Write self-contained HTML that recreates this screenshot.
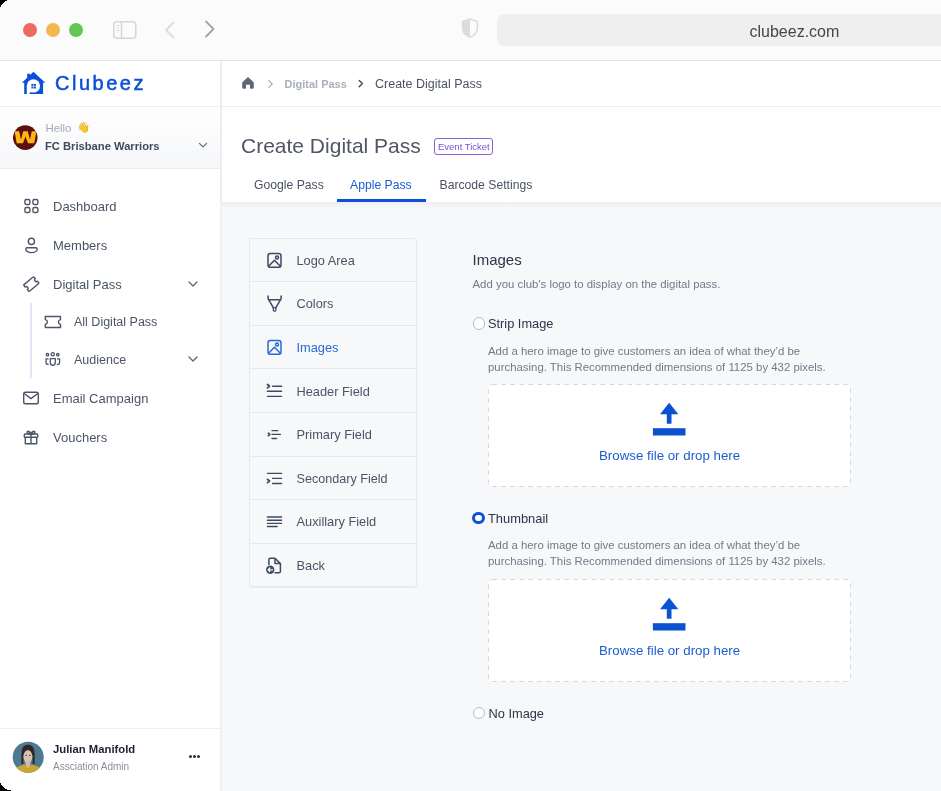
<!DOCTYPE html>
<html><head><meta charset="utf-8">
<style>
*{box-sizing:border-box;margin:0;padding:0}
html,body{width:941px;height:791px;overflow:hidden;background:#000}
body{font-family:"Liberation Sans",sans-serif;position:relative}
.win{will-change:transform;position:absolute;left:0;top:0;width:941px;height:791px;background:#fff;overflow:hidden}
.abs{position:absolute}
.t{position:absolute;white-space:nowrap;line-height:20px;height:20px}
/* chrome */
.chrome{position:absolute;left:0;top:0;width:941px;height:61px;background:#fbfbfb;border-bottom:1px solid #e4e4e4}
.dot{position:absolute;top:23px;width:14px;height:14px;border-radius:50%}
.url{position:absolute;left:497px;top:14px;width:460px;height:32px;border-radius:7px;background:#efefef}
/* sidebar */
.side{position:absolute;left:0;top:61px;width:222px;height:730px;background:#fff;box-shadow:inset -2px 0 0 #f0f1f4}
.nav{color:#4b5567;font-size:13px}
.main{position:absolute;left:222px;top:61px;width:719px;height:730px;background:#f7f8fa}
</style></head><body><div class="win">
<!-- CHROME -->
<div class="chrome">
  <div class="dot" style="left:23px;background:#ec6a5e"></div>
  <div class="dot" style="left:46px;background:#f2b84d"></div>
  <div class="dot" style="left:69px;background:#62c655"></div>
  <svg class="abs" style="left:110px;top:18px" width="30" height="24" viewBox="0 0 30 24">
    <rect x="3.75" y="3.75" width="22" height="16.5" rx="3" fill="none" stroke="#d6d6d6" stroke-width="1.5"/>
    <line x1="11.5" y1="3.5" x2="11.5" y2="20.5" stroke="#d6d6d6" stroke-width="1.5"/>
    <line x1="6.5" y1="7.5" x2="9" y2="7.5" stroke="#d6d6d6" stroke-width="1"/>
    <line x1="6.5" y1="10" x2="9" y2="10" stroke="#d6d6d6" stroke-width="1"/>
    <line x1="6.5" y1="12.5" x2="9" y2="12.5" stroke="#d6d6d6" stroke-width="1"/>
  </svg>
  <svg class="abs" style="left:160px;top:17.5px" width="20" height="24" viewBox="0 0 20 24">
    <polyline points="13.5,4.5 6,12 13.5,19.5" fill="none" stroke="#dcdcdc" stroke-width="1.8" stroke-linecap="round" stroke-linejoin="round"/>
  </svg>
  <svg class="abs" style="left:200px;top:17px" width="20" height="24" viewBox="0 0 20 24">
    <polyline points="6,4.5 13.5,12 6,19.5" fill="none" stroke="#a3a3a3" stroke-width="1.8" stroke-linecap="round" stroke-linejoin="round"/>
  </svg>
  <svg class="abs" style="left:460px;top:16px" width="20" height="24" viewBox="0 0 20 24">
    <path d="M10 3.1 L17.4 5.4 V12.4 C17.4 16.6 14 19.4 10 21.3 C6 19.4 2.6 16.6 2.6 12.4 V5.4 Z" fill="none" stroke="#dcdce0" stroke-width="1.6" stroke-linejoin="round"/>
    <path d="M10 3.1 L2.6 5.4 V12.4 C2.6 16.6 6 19.4 10 21.3 Z" fill="#dcdce0"/>
  </svg>
  <div class="url"></div>
  <div class="t" style="left:749.5px;top:22px;font-size:16px;color:#464646">clubeez.com</div>
</div>

<!-- SIDEBAR -->
<div class="side"></div>
<div class="abs" style="left:0;top:106px;width:220px;height:1px;background:#eceef1"></div>
<svg class="abs" style="left:20px;top:68px" width="30" height="30" viewBox="0 0 30 30">
  <path fill="#0b50d8" d="M13.4 3.7 L25.3 14.7 H23.1 V26.1 H4.2 V14.7 H1.9 L7.2 9.8 V5.7 H10.2 V7 Z"/>
  <circle cx="13.4" cy="17.9" r="6.7" fill="#fff"/>
  <path fill="#fff" d="M6.8 18 V26.3 H8.9 L11 23.5 Z"/>
  <rect x="11.4" y="15.9" width="2" height="2" fill="#0b50d8"/>
  <rect x="13.9" y="15.9" width="2" height="2" fill="#0b50d8"/>
  <rect x="11.4" y="18.5" width="2" height="2" fill="#0b50d8"/>
  <rect x="13.9" y="18.5" width="2" height="2" fill="#0b50d8"/>
</svg>
<div class="t" style="left:55px;top:73px;font-size:20px;letter-spacing:2.5px;color:#0b50d8;-webkit-text-stroke:0.5px #0b50d8">Clubeez</div>

<div class="abs" style="left:0;top:107px;width:220px;height:61px;background:linear-gradient(#ffffff,#f6f7f9)"></div>
<div class="abs" style="left:0;top:168px;width:220px;height:1px;background:#e9ebef"></div>
<svg class="abs" style="left:13px;top:125px" width="25" height="25" viewBox="0 0 25 25">
  <circle cx="12.25" cy="12.6" r="12.3" fill="#5a0f12"/>
  <path fill="#ffb612" d="M1.59 6.26 L6.24 6.26 L7.97 14.63 L10.23 6.26 L14.74 6.26 L17 14.63 L18.73 6.26 L23.38 6.26 L21.25 18.35 L15.01 18.35 L12.49 11.44 L9.96 18.35 L3.72 18.35 Z"/>
</svg>
<div class="t" style="left:45.5px;top:117.5px;font-size:11.4px;color:#a4aab4">Hello</div>
<div class="t" style="left:76.5px;top:117px;font-size:10.5px;">&#128075;</div>
<div class="t" style="left:45px;top:136px;font-size:11.2px;font-weight:bold;color:#3f4a5c">FC Brisbane Warriors</div>
<svg class="abs" style="left:196px;top:140px" width="14" height="10" viewBox="0 0 14 10">
  <polyline points="3.4,3.3 7,6.9 10.6,3.3" fill="none" stroke="#5f677a" stroke-width="1.15" stroke-linecap="round" stroke-linejoin="round"/>
</svg>

<!-- nav -->
<svg class="abs" style="left:22px;top:197px" width="18" height="18" viewBox="0 0 18 18" fill="none" stroke="#4b5567" stroke-width="1.4">
  <rect x="2.9" y="2.5" width="5" height="5" rx="1.6"/><rect x="10.9" y="2.5" width="5" height="5" rx="1.6"/>
  <rect x="2.9" y="10.5" width="5" height="5" rx="1.6"/><rect x="10.9" y="10.5" width="5" height="5" rx="1.6"/>
</svg>
<div class="t nav" style="left:53px;top:197px">Dashboard</div>

<svg class="abs" style="left:22px;top:236px" width="18" height="18" viewBox="0 0 18 18" fill="none" stroke="#4b5567" stroke-width="1.4">
  <circle cx="9.4" cy="5.4" r="3.1"/>
  <path d="M5.3 11.8 H13.7 C14.6 11.8 15.2 12.4 15.2 13.2 C15.2 15.2 12.6 16.6 9.5 16.6 C6.4 16.6 3.8 15.2 3.8 13.2 C3.8 12.4 4.4 11.8 5.3 11.8 Z"/>
</svg>
<div class="t nav" style="left:53px;top:236px">Members</div>

<svg class="abs" style="left:22px;top:275px" width="18" height="18" viewBox="0 0 18 18" fill="none" stroke="#4b5567" stroke-width="1.4" stroke-linejoin="round">
  <path transform="translate(9.3 9.1) rotate(-40)" d="M -5.6 -4.3 H 5.6 Q 6.6 -4.3 6.6 -3.3 V -1.7 A 1.7 1.7 0 0 0 6.6 1.7 V 3.3 Q 6.6 4.3 5.6 4.3 H -5.6 Q -6.6 4.3 -6.6 3.3 V 1.7 A 1.7 1.7 0 0 0 -6.6 -1.7 V -3.3 Q -6.6 -4.3 -5.6 -4.3 Z"/>
</svg>
<div class="t nav" style="left:53px;top:275px">Digital Pass</div>
<svg class="abs" style="left:186px;top:279px" width="14" height="10" viewBox="0 0 14 10">
  <polyline points="3,3 7,7 11,3" fill="none" stroke="#5b6478" stroke-width="1.3" stroke-linecap="round" stroke-linejoin="round"/>
</svg>

<div class="abs" style="left:30px;top:303px;width:1.6px;height:75px;background:#e0e7f7"></div>
<svg class="abs" style="left:43px;top:313px" width="20" height="18" viewBox="0 0 20 18" fill="none" stroke="#4b5567" stroke-width="1.4" stroke-linejoin="round">
  <path d="M2.3 3.5 H17.5 V6.6 C16.2 6.9 15.4 7.8 15.4 9 C15.4 10.2 16.2 11.1 17.5 11.4 V14.5 H2.3 V11.4 C3.6 11.1 4.4 10.2 4.4 9 C4.4 7.8 3.6 6.9 2.3 6.6 Z"/>
</svg>
<div class="t nav" style="left:74px;top:312px;font-size:12.5px">All Digital Pass</div>

<svg class="abs" style="left:43px;top:350px" width="20" height="18" viewBox="0 0 20 18" fill="none" stroke="#4b5567" stroke-width="1.3" stroke-linejoin="round" stroke-linecap="round">
  <circle cx="9.7" cy="4.3" r="1.6"/><circle cx="4.5" cy="4.7" r="1.2"/><circle cx="14.8" cy="4.7" r="1.2"/>
  <path d="M7.3 8.6 H12.3 V12.6 C12.3 14.4 11.2 15.3 9.8 15.3 C8.4 15.3 7.3 14.4 7.3 12.6 Z"/>
  <path d="M5.1 8.9 H3 V12.2 C3 13.6 4 14.4 5.1 14.4"/>
  <path d="M14.5 8.9 H16.6 V12.2 C16.6 13.6 15.6 14.4 14.5 14.4"/>
</svg>
<div class="t nav" style="left:74px;top:350px;font-size:12.5px">Audience</div>
<svg class="abs" style="left:186px;top:354px" width="14" height="10" viewBox="0 0 14 10">
  <polyline points="3,3 7,7 11,3" fill="none" stroke="#5b6478" stroke-width="1.3" stroke-linecap="round" stroke-linejoin="round"/>
</svg>

<svg class="abs" style="left:22px;top:389px" width="18" height="18" viewBox="0 0 18 18" fill="none" stroke="#4b5567" stroke-width="1.4" stroke-linejoin="round">
  <rect x="1.7" y="3.3" width="14.6" height="11.4" rx="1.8"/>
  <polyline points="2.2,4.5 9,9.6 15.8,4.5"/>
</svg>
<div class="t nav" style="left:53px;top:389px">Email Campaign</div>

<svg class="abs" style="left:22px;top:428px" width="18" height="18" viewBox="0 0 18 18" fill="none" stroke="#4b5567" stroke-width="1.4" stroke-linejoin="round">
  <rect x="2.3" y="6" width="13.4" height="3.2" rx="0.8"/>
  <path d="M3.3 9.2 V15.8 H14.7 V9.2"/>
  <line x1="9" y1="6" x2="9" y2="15.8"/>
  <path d="M9 6 C8 3.5 5.5 2.5 5 4 C4.6 5.3 7 6 9 6 C11 6 13.4 5.3 13 4 C12.5 2.5 10 3.5 9 6"/>
</svg>
<div class="t nav" style="left:53px;top:428px">Vouchers</div>

<!-- user -->
<div class="abs" style="left:0;top:728px;width:220px;height:1px;background:#eef0f3"></div>
<svg class="abs" style="left:12px;top:741px" width="32" height="32" viewBox="0 0 32 32">
  <defs><clipPath id="av"><circle cx="16.2" cy="16.2" r="15.5"/></clipPath></defs>
  <g clip-path="url(#av)">
    <rect width="32" height="32" fill="#4d7a92"/>
    <path d="M9.4 12.5 C9.4 6.2 12.2 3.8 16 3.8 C19.8 3.8 22.6 6.2 22.6 12.5 V23 C21.8 23.6 21 23.4 20.6 22.6 V14 H11.4 V22.6 C11 23.4 10.2 23.6 9.4 23 Z" fill="#302826"/>
    <ellipse cx="15.9" cy="15.6" rx="4.4" ry="6.6" fill="#dcc0b4"/>
    <path d="M11.3 12.6 C11.5 8.2 13.5 6.6 16 6.6 C18.5 6.6 20.5 8.2 20.7 12.6 C19.6 10 17.6 9 16 9 C14.4 9 12.4 10 11.3 12.6 Z" fill="#302826"/>
    <ellipse cx="14" cy="14.3" rx="0.9" ry="0.6" fill="#4a3a36"/>
    <ellipse cx="17.9" cy="14.3" rx="0.9" ry="0.6" fill="#4a3a36"/>
    <rect x="13.4" y="20.5" width="5" height="6.5" fill="#d6b4a8"/>
    <path d="M2 33 L4.4 26.5 C7 25 10 24.2 12.4 23.4 L16 27.6 L19.6 23.4 C22.2 24.2 25.6 25.2 28.4 26.4 L31 33 Z" fill="#cca632"/>
  </g>
</svg>
<div class="t" style="left:53px;top:739px;font-size:11.3px;font-weight:bold;color:#1b2035">Julian Manifold</div>
<div class="t" style="left:53px;top:757px;font-size:10px;color:#8a8f99">Assciation Admin</div>
<div class="abs" style="left:189px;top:755px;width:3px;height:3px;border-radius:50%;background:#2a2f3d"></div>
<div class="abs" style="left:193px;top:755px;width:3px;height:3px;border-radius:50%;background:#2a2f3d"></div>
<div class="abs" style="left:197px;top:755px;width:3px;height:3px;border-radius:50%;background:#2a2f3d"></div>


<!-- MAIN -->
<div class="main"></div>
<!-- header -->
<div class="abs" style="left:222px;top:61px;width:719px;height:141px;background:#fff;box-shadow:0 1px 3px rgba(20,30,50,0.06)"></div>
<div class="abs" style="left:222px;top:106px;width:719px;height:1px;background:#eceef1"></div>
<svg class="abs" style="left:240px;top:75px" width="16" height="16" viewBox="0 0 16 16">
  <path fill="#5e6576" d="M8 2 L13.8 7.6 V12.6 C13.8 13.4 13.3 13.8 12.6 13.8 H11 C10.4 13.8 10 13.4 10 12.8 V9.8 H6 V12.8 C6 13.4 5.6 13.8 5 13.8 H3.4 C2.7 13.8 2.2 13.4 2.2 12.6 V7.6 Z"/>
</svg>
<svg class="abs" style="left:264.5px;top:78px" width="12" height="12" viewBox="0 0 12 12">
  <polyline points="3.8,2.3 7.2,5.8 3.8,9.3" fill="none" stroke="#a4aab5" stroke-width="1.2" stroke-linecap="round" stroke-linejoin="round"/>
</svg>
<div class="t" style="left:284.5px;top:74px;font-size:11px;font-weight:bold;color:#a9afba">Digital Pass</div>
<svg class="abs" style="left:355px;top:78px" width="12" height="12" viewBox="0 0 12 12">
  <polyline points="4.2,2.5 7.4,5.6 4.2,8.7" fill="none" stroke="#3f4656" stroke-width="1.4" stroke-linecap="round" stroke-linejoin="round"/>
</svg>
<div class="t" style="left:375px;top:74px;font-size:12.5px;color:#4b5263">Create Digital Pass</div>

<div class="t" style="left:241px;top:134px;font-size:21px;color:#505666;height:24px;line-height:24px">Create Digital Pass</div>
<div class="abs" style="left:434px;top:138px;width:59px;height:17px;border:1px solid #8a5ddb;border-radius:3px"></div>
<div class="t" style="left:438px;top:137px;font-size:9.5px;color:#7d4fd6">Event Ticket</div>

<div class="t" style="left:254px;top:175px;font-size:12.2px;color:#4b5262">Google Pass</div>
<div class="t" style="left:350px;top:175px;font-size:12.2px;color:#1d5cd4">Apple Pass</div>
<div class="t" style="left:439.5px;top:175px;font-size:12.2px;color:#4b5262">Barcode Settings</div>
<div class="abs" style="left:337px;top:199px;width:89px;height:3px;background:#0b50d8"></div>


<div class="abs" style="left:222px;top:202px;width:719px;height:589px;background:#f7f8fa"></div>
<div class="abs" style="left:222px;top:202px;width:719px;height:6px;background:linear-gradient(rgba(30,40,60,0.05),rgba(30,40,60,0))"></div>
<!-- left menu panel -->
<div class="abs" style="left:249px;top:238px;width:168px;height:349px;border:1px solid #e6e8ec;border-radius:3px;background:#f7f8fa;box-shadow:0 1px 1px rgba(20,30,50,0.06)"></div>
<div class="abs" style="left:249px;top:281px;width:168px;height:1px;background:#e6e8ec"></div>
<div class="abs" style="left:249px;top:325px;width:168px;height:1px;background:#e6e8ec"></div>
<div class="abs" style="left:249px;top:368px;width:168px;height:1px;background:#e6e8ec"></div>
<div class="abs" style="left:249px;top:412px;width:168px;height:1px;background:#e6e8ec"></div>
<div class="abs" style="left:249px;top:456px;width:168px;height:1px;background:#e6e8ec"></div>
<div class="abs" style="left:249px;top:499px;width:168px;height:1px;background:#e6e8ec"></div>
<div class="abs" style="left:249px;top:543px;width:168px;height:1px;background:#e6e8ec"></div>

<svg class="abs" style="left:262px;top:248px" width="26" height="24" viewBox="0 0 26 24" fill="none" stroke="#3f4a62" stroke-width="1.5" stroke-linejoin="round">
  <rect x="6" y="5.6" width="13" height="13.7" rx="2.4"/>
  <path d="M6.6 18.2 L12.4 12.2 L18.4 18.2"/>
  <circle cx="15" cy="9.6" r="1.5"/>
</svg>
<div class="t" style="left:296.5px;top:251px;font-size:12.8px;color:#4b5466">Logo Area</div>

<svg class="abs" style="left:262px;top:291px" width="26" height="24" viewBox="0 0 26 24" fill="none" stroke="#3f4a62" stroke-width="1.5" stroke-linejoin="round" stroke-linecap="round">
  <path d="M6.1 5.1 V7.4 C6.1 8.2 6.5 8.8 7.1 8.8 H18.1 C18.7 8.8 19.1 8.2 19.1 7.4 V5.1"/>
  <path d="M6.8 8.8 L11.3 16.6 M18.4 8.8 L13.9 16.6"/>
  <path d="M11.3 16.6 V18.9 A1.3 1.3 0 0 0 13.9 18.9 V16.6 Z" stroke-width="1.3"/>
</svg>
<div class="t" style="left:296.5px;top:294px;font-size:12.8px;color:#4b5466">Colors</div>

<svg class="abs" style="left:262px;top:335px" width="26" height="24" viewBox="0 0 26 24" fill="none" stroke="#2b69d6" stroke-width="1.5" stroke-linejoin="round">
  <rect x="6" y="5.6" width="13" height="13.7" rx="2.4"/>
  <path d="M6.6 18.2 L12.4 12.2 L18.4 18.2"/>
  <circle cx="15" cy="9.6" r="1.5"/>
</svg>
<div class="t" style="left:296.5px;top:338px;font-size:12.8px;color:#2b69d6">Images</div>

<svg class="abs" style="left:262px;top:378px" width="26" height="24" viewBox="0 0 26 24" fill="none" stroke="#3f4a62" stroke-width="1.35" stroke-linecap="round" stroke-linejoin="round">
  <polyline points="5.5,6.5 7.5,8.2 5.5,9.9" stroke-width="1.8"/>
  <line x1="10.6" y1="8.2" x2="19.6" y2="8.2"/>
  <line x1="5.4" y1="13.2" x2="19.6" y2="13.2"/>
  <line x1="5.4" y1="18.3" x2="19.6" y2="18.3"/>
</svg>
<div class="t" style="left:296.5px;top:382px;font-size:12.8px;color:#4b5466">Header Field</div>

<svg class="abs" style="left:262px;top:422px" width="26" height="24" viewBox="0 0 26 24" fill="none" stroke="#3f4a62" stroke-width="1.35" stroke-linecap="round" stroke-linejoin="round">
  <line x1="10" y1="8.6" x2="15.8" y2="8.6"/>
  <polyline points="6.4,11.2 7.8,12.4 6.4,13.6" stroke-width="1.7"/>
  <line x1="10" y1="12.4" x2="18.4" y2="12.4"/>
  <line x1="10" y1="16.5" x2="14.6" y2="16.5"/>
</svg>
<div class="t" style="left:296.5px;top:425px;font-size:12.8px;color:#4b5466">Primary Field</div>

<svg class="abs" style="left:262px;top:466px" width="26" height="24" viewBox="0 0 26 24" fill="none" stroke="#3f4a62" stroke-width="1.35" stroke-linecap="round" stroke-linejoin="round">
  <line x1="5.4" y1="7.4" x2="19.6" y2="7.4"/>
  <line x1="10.6" y1="12.4" x2="19.6" y2="12.4"/>
  <polyline points="5.5,13.4 7.5,15 5.5,16.6" stroke-width="1.8"/>
  <line x1="10.6" y1="17.5" x2="19.6" y2="17.5"/>
</svg>
<div class="t" style="left:296.5px;top:469px;font-size:12.6px;color:#4b5466">Secondary Field</div>

<svg class="abs" style="left:262px;top:510px" width="26" height="24" viewBox="0 0 26 24" fill="none" stroke="#3f4a62" stroke-width="1.35" stroke-linecap="round">
  <line x1="5.4" y1="7" x2="19.6" y2="7"/>
  <line x1="5.4" y1="10.2" x2="19.6" y2="10.2"/>
  <line x1="5.4" y1="13.3" x2="19.6" y2="13.3"/>
  <line x1="5.4" y1="16.5" x2="15.2" y2="16.5"/>
</svg>
<div class="t" style="left:296.5px;top:512px;font-size:12.8px;color:#4b5466">Auxillary Field</div>

<svg class="abs" style="left:262px;top:553px" width="26" height="24" viewBox="0 0 26 24" fill="none" stroke="#3f4a62" stroke-width="1.5" stroke-linejoin="round">
  <path d="M6.9 12 V6.6 C6.9 5.7 7.5 5.2 8.3 5.2 H13 L18.4 10.6 V18.4 C18.4 19.2 17.8 19.8 17 19.8 H12.4"/>
  <path d="M13 5.2 V10.6 H18.4"/>
  <circle cx="8.2" cy="16.8" r="4.2" fill="#3f4a62" stroke="none"/>
  <path d="M10.6 16.8 H6.2 M7.8 15 L6 16.8 L7.8 18.6" stroke="#fff" stroke-width="1.2" stroke-linecap="round"/>
</svg>
<div class="t" style="left:296.5px;top:556px;font-size:12.8px;color:#4b5466">Back</div>

<!-- right section -->
<div class="t" style="left:472.5px;top:250px;font-size:15px;color:#2f3546">Images</div>
<div class="t" style="left:472.5px;top:274px;font-size:11.4px;color:#737987">Add you club's logo to display on the digital pass.</div>

<div class="abs" style="left:472.5px;top:317.3px;width:12.6px;height:12.6px;border:1px solid #b9bdc6;border-radius:50%;background:#fff"></div>
<div class="t" style="left:488px;top:314px;font-size:12.8px;color:#2e3447">Strip Image</div>
<div class="t" style="left:488px;top:341px;font-size:11.4px;color:#737987">Add a hero image to give customers an idea of what they’d be</div>
<div class="t" style="left:488px;top:357px;font-size:11.4px;color:#737987">purchasing. This Recommended dimensions of 1125 by 432 pixels.</div>
<svg class="abs" style="left:488px;top:384px" width="363" height="103" viewBox="0 0 363 103">
  <rect x="0.5" y="0.5" width="362" height="102" rx="4" fill="#fff" stroke="#d3d6dd" stroke-width="1" stroke-dasharray="4.5 4.5"/>
</svg>
<svg class="abs" style="left:645px;top:395px" width="50" height="50" viewBox="0 0 50 50">
  <path fill="#0a52d0" d="M24.2 7.7 L33.3 19.3 H26.5 V28.8 H21.8 V19.3 H15 Z"/>
  <rect x="7.9" y="33.2" width="32.6" height="7.3" fill="#0a52d0"/>
</svg>
<div class="t" style="left:599px;top:446px;font-size:13.3px;color:#1d5dcf">Browse file or drop here</div>

<div class="abs" style="left:472.4px;top:511.7px;width:12.7px;height:12.7px;border:3px solid #0b50d8;border-radius:50%;background:#fff"></div>
<div class="t" style="left:488px;top:509px;font-size:12.9px;color:#2e3447">Thumbnail</div>
<div class="t" style="left:488px;top:535px;font-size:11.4px;color:#737987">Add a hero image to give customers an idea of what they’d be</div>
<div class="t" style="left:488px;top:551px;font-size:11.4px;color:#737987">purchasing. This Recommended dimensions of 1125 by 432 pixels.</div>
<svg class="abs" style="left:488px;top:579px" width="363" height="103" viewBox="0 0 363 103">
  <rect x="0.5" y="0.5" width="362" height="102" rx="4" fill="#fff" stroke="#d3d6dd" stroke-width="1" stroke-dasharray="4.5 4.5"/>
</svg>
<svg class="abs" style="left:645px;top:590px" width="50" height="50" viewBox="0 0 50 50">
  <path fill="#0a52d0" d="M24.2 7.7 L33.3 19.3 H26.5 V28.8 H21.8 V19.3 H15 Z"/>
  <rect x="7.9" y="33.2" width="32.6" height="7.3" fill="#0a52d0"/>
</svg>
<div class="t" style="left:599px;top:641px;font-size:13.3px;color:#1d5dcf">Browse file or drop here</div>

<div class="abs" style="left:472.5px;top:706.6px;width:12.6px;height:12.6px;border:1px solid #b9bdc6;border-radius:50%;background:#fff"></div>
<div class="t" style="left:488.5px;top:704px;font-size:12.8px;color:#2e3447">No Image</div>

<svg class="abs" style="left:0;top:0;z-index:10" width="941" height="791" viewBox="0 0 941 791" shape-rendering="crispEdges" fill="#000"><rect x="0" y="0" width="7" height="1"/><rect x="0" y="1" width="5" height="1"/><rect x="0" y="2" width="4" height="1"/><rect x="0" y="3" width="3" height="1"/><rect x="0" y="4" width="2" height="1"/><rect x="0" y="5" width="1" height="1"/><rect x="0" y="6" width="1" height="1"/><rect x="0" y="783" width="1" height="1"/><rect x="0" y="784" width="1" height="1"/><rect x="0" y="785" width="2" height="1"/><rect x="0" y="786" width="3" height="1"/><rect x="0" y="787" width="4" height="1"/><rect x="0" y="788" width="5" height="1"/><rect x="0" y="789" width="7" height="1"/><rect x="0" y="790" width="11" height="1"/></svg>
</div></body></html>
